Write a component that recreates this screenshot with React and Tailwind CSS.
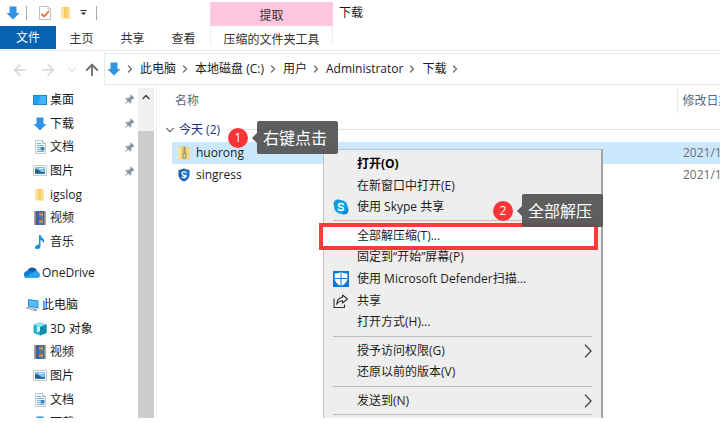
import React from 'react';
import { ArrowLeft, ArrowRight, ArrowUp, ChevronDown, ChevronRight, ChevronUp } from 'lucide-react';

/* ---------- Icons ---------- */

const DownArrowIcon = () => (
    <svg width="14" height="14" viewBox="0 0 14 14">
        <path d="M3.500 0.500h7v6.500h3L7 13.500 0.500 7h3z" fill="#3193e3" />
    </svg>
);

const FolderIcon = () => (
    <svg width="14" height="14" viewBox="0 0 14 14">
        <path d="M2.500 1h7.500v11H2.500z" fill="#f5cf66" />
        <path d="M8.500 2.500h2.500V13H4l4.500-1z" fill="#fbe09a" />
        <path d="M2.500 1l2.500 1v11l-2.500-1z" fill="#fae3a0" />
    </svg>
);

const CheckDocIcon = () => (
    <svg width="14" height="16" viewBox="0 0 14 16">
        <path d="M1.500 1.500h8.500l2.500 2.500v10.500h-11z" fill="#fff" stroke="#c0c0c0" />
        <path d="M10 1.500V4h2.500" fill="none" stroke="#c0c0c0" />
        <path d="M3.500 9l2.500 2.500 5-5.500" fill="none" stroke="#ec6a2c" strokeWidth="1.800" />
    </svg>
);

const DesktopIcon = () => (
    <svg width="14" height="14" viewBox="0 0 14 14">
        <path d="M0 2h14v10H0z" fill="#1787d8" />
        <path d="M1 3h12v8H1z" fill="#1fa2f4" />
        <path d="M8 3h5v8H5z" fill="#43b6fb" />
    </svg>
);

const DocumentIcon = () => (
    <svg width="14" height="14" viewBox="0 0 14 14">
        <path d="M2.500 0.500h7l3 3v10h-10z" fill="#f7f9fa" stroke="#c3cacf" />
        <path d="M9.500 0.500v3h3" fill="#dfe5e9" stroke="#b4bcc2" />
        <path d="M4 3.500h4M4 5.500h7M4 7.500h3M4 9.500h3M4 11.500h7" stroke="#6fb2de" />
        <path d="M7.500 7h4v3.500h-4z" fill="#3b83b8" />
    </svg>
);

const PictureIcon = () => (
    <svg width="14" height="14" viewBox="0 0 14 14">
        <path d="M0.500 1.500h13v10H0.500z" fill="#fff" stroke="#c0c6ca" />
        <path d="M2 3h10v7H2z" fill="#7cc3f1" />
        <path d="M2 5q3 0 5 2t5 1v2H2z" fill="#2e6171" />
        <path d="M2 9q5-1 10-0.500V10H2z" fill="#2c78bd" />
        <path d="M6 4h4v1H6z" fill="#e6f4fc" />
    </svg>
);

const VideoIcon = () => (
    <svg width="14" height="14" viewBox="0 0 14 14">
        <path d="M1.500 0h11v14h-11z" fill="#4b4f57" />
        <path d="M4 0.500h6v6H4zM4 7.500h6v6H4z" fill="#4a8ff0" />
        <path d="M4 0.500h2v6H4zM4 7.500h2v6H4z" fill="#2f5fc4" />
        <path d="M6 1.500l3-0.500v3H6z" fill="#c9562e" />
        <path d="M6 8.500l3-0.500v3H6z" fill="#c9562e" />
        <path d="M6 3h4v1.500H6zM6 10h4v1.500H6z" fill="#d9b13a" />
        <path d="M6 4.500h3v1H6zM6 11.500h3v1H6z" fill="#2f7a3e" />
        <path d="M2.700 0.500v13M11.300 0.500v13" stroke="#e8e8e8" strokeWidth="1" strokeDasharray="1 1" />
    </svg>
);

const MusicIcon = () => (
    <svg width="14" height="14" viewBox="0 0 14 14">
        <path d="M6 0h1.500q0.500 2 2.500 3.500t0.500 5q0-2.500-3-3.500v6q0 3-3 3T2 12t3-2.500l1 0.200z" fill="#1592e6" />
    </svg>
);

const CloudIcon = () => (
    <svg width="16" height="12" viewBox="0 0 16 12">
        <path d="M3 5q1-4.500 5-4.500T13 4L8 7z" fill="#0f5cb0" />
        <path d="M3.500 4q2-1 4 0.500L12 8l-8.500 3Q0 11 0 7.500T3.500 4z" fill="#157bd2" />
        <path d="M9 5.500q2-2.500 4.500-1.200 2.500 1 2.500 3.500 0 3.200-3.200 3.200H3.500q-1.500 0-2.300-0.800z" fill="#2ba2ee" />
    </svg>
);

const ComputerIcon = () => (
    <svg width="15" height="14" viewBox="0 0 15 14">
        <path d="M3 1l10.500 1.500v8L3 8.500z" fill="#2b8ed8" />
        <path d="M4 2.200l8.500 1.200v5.800L4 7.700z" fill="#57bdf5" />
        <path d="M0.500 10l3-1.500 9 3-2 1.800z" fill="#8a97a3" />
        <path d="M2.500 10l1.500-0.700 6 2-0.800 0.800z" fill="#d3dae0" />
    </svg>
);

const CubeIcon = () => (
    <svg width="14" height="14" viewBox="0 0 14 14">
        <path d="M7 0.500l6.500 2v8.500L7 13.500 0.500 11V2.500z" fill="#28b3d2" />
        <path d="M7 0.500l6.500 2L7 5 0.500 2.500z" fill="#8fe3f0" />
        <path d="M7 5l6.500-2.500V11L7 13.500z" fill="#148dac" />
        <path d="M4 4v6.500L7 9V5z" fill="#c8f3f8" />
    </svg>
);

const PinIcon = () => (
    <svg width="10" height="11" viewBox="0 0 10 11">
        <path d="M6 0.500L9.500 4l-1 0.800-0.700-0.100-1.600 1.800 0.100 2.200-0.900 0.900L3.300 7.500 0.500 10.300 0 10l2.500-3.300L0.600 4.800l0.900-0.900 2.200 0.100 1.700-1.700-0.100-0.900z" fill="#8b98a4" />
    </svg>
);

const ZipIcon = () => (
    <svg width="14" height="14" viewBox="0 0 14 14">
        <path d="M1 0.500h5l1 1h6v12H1z" fill="#efc95f" />
        <path d="M1 0.500l3.500 1v12.500l-3.500-1z" fill="#fae29b" />
        <path d="M9.500 2.500H13v11H9.500z" fill="#f8da87" />
        <path d="M7.500 0.500v7.500" stroke="#77715c" strokeWidth="2" strokeDasharray="1 1" />
        <path d="M6 7.500h3v4.500h-3z" fill="#c9cbcc" stroke="#888" strokeWidth="0.800" />
    </svg>
);

const ShieldSIcon = () => (
    <svg width="12" height="14" viewBox="0 0 12 14">
        <path d="M6 0.500l5.500 1.700v5Q11 11.500 6 13.500 1 11.500 0.500 7.200v-5z" fill="#155fae" />
        <path d="M6 1.800l4.300 1.300v4Q10 10.500 6 12.200z" fill="#2d83d3" />
        <path d="M8.200 4.300Q4 3 4 5.300T8 8q0 2.200-4.300 1.300" fill="none" stroke="#fff" strokeWidth="1.400" />
    </svg>
);

const SkypeIcon = () => (
    <svg width="16" height="16" viewBox="0 0 16 16">
        <circle cx="5" cy="5" r="4.500" fill="#1597dd" />
        <circle cx="11" cy="11" r="4.500" fill="#0b7ec8" />
        <circle cx="8" cy="8" r="6.800" fill="#0e9fe0" />
        <path d="M10.600 5.700Q9.800 4.600 8 4.600 5.700 4.600 5.700 6.200T8 7.900t2.500 1.900Q10.500 11.400 8 11.400 6 11.400 5.300 10.100" fill="none" stroke="#fff" strokeWidth="1.500" strokeLinecap="round" />
    </svg>
);

const DefenderIcon = () => (
    <svg width="16" height="16" viewBox="0 0 16 16">
        <path d="M0 0h16v16H0z" fill="#0a78d7" />
        <path d="M8 1q2.500 1.500 6.300 1.500v5.500q-0.600 4.700-6.300 7-5.700-2.300-6.300-7V2.500Q5.500 2.500 8 1z" fill="#fff" />
        <path d="M8 1v14M1.500 7.500h13" stroke="#0a78d7" strokeWidth="1" />
    </svg>
);

const ShareIcon = () => (
    <svg width="16" height="14" viewBox="0 0 16 14" fill="none" stroke="#333" strokeWidth="1.100">
        <path d="M1 4.500v9h10.500v-3" />
        <path d="M9.500 1l5 4-5 4V6.700Q6 6.500 3.700 10.300 4 4 9.500 3.300z" strokeLinejoin="round" />
    </svg>
);

const SubmenuArrow = () => (
    <svg width="8" height="14" viewBox="0 0 8 14" fill="none" stroke="#333" strokeWidth="1.200">
        <path d="M1 0.700L7 7l-6 6.300" />
    </svg>
);

/* ---------- Data ---------- */

const crumbs = ['此电脑', '本地磁盘 (C:)', '用户', 'Administrator', '下载'];

const quickAccess = [
    { label: '桌面', icon: <DesktopIcon />, pinned: true },
    { label: '下载', icon: <DownArrowIcon />, pinned: true },
    { label: '文档', icon: <DocumentIcon />, pinned: true },
    { label: '图片', icon: <PictureIcon />, pinned: true },
    { label: 'igslog', icon: <FolderIcon /> },
    { label: '视频', icon: <VideoIcon /> },
    { label: '音乐', icon: <MusicIcon /> }
];

const thisPc = [
    { label: '3D 对象', icon: <CubeIcon /> },
    { label: '视频', icon: <VideoIcon /> },
    { label: '图片', icon: <PictureIcon /> },
    { label: '文档', icon: <DocumentIcon /> },
    { label: '下载', icon: <DownArrowIcon /> }
];

const menuGroups = [
    {
        height: 'h-[65px]',
        items: [
            { label: '打开(O)', bold: true },
            { label: '在新窗口中打开(E)' },
            { label: '使用 Skype 共享', icon: <SkypeIcon /> }
        ]
    },
    {
        height: 'h-[108px]',
        items: [
            { label: '全部解压缩(T)...', marked: true },
            { label: '固定到“开始”屏幕(P)' },
            { label: '使用 Microsoft Defender扫描...', icon: <DefenderIcon /> },
            { label: '共享', icon: <ShareIcon /> },
            { label: '打开方式(H)...' }
        ]
    },
    {
        height: 'h-[43px]',
        items: [
            { label: '授予访问权限(G)', submenu: true },
            { label: '还原以前的版本(V)' }
        ]
    },
    {
        height: 'h-[21px]',
        items: [{ label: '发送到(N)', submenu: true }]
    },
    {
        height: 'h-[43px]',
        items: []
    }
];

/* ---------- Parts ---------- */

function TitleBar() {
    return (
        <header className="flex h-[51px] shrink-0 border-b border-[#e9e9e9]">
            <div className="flex flex-col">
                <div className="flex h-[26px] items-center pl-[6px]">
                    <DownArrowIcon />
                    <span className="ml-[6px] h-[14px] w-px bg-[#a8a8a8]" />
                    <button aria-label="属性" className="ml-[11px]"><CheckDocIcon /></button>
                    <button aria-label="新建文件夹" className="ml-[7px]"><FolderIcon /></button>
                    <button aria-label="自定义快速访问工具栏" className="ml-[7px]">
                        <svg width="7" height="6" viewBox="0 0 7 6">
                            <path d="M0.500 0.500h6" stroke="#222" />
                            <path d="M1 2.500h5L3.500 5z" fill="#222" />
                        </svg>
                    </button>
                    <span className="ml-[9px] h-[14px] w-px bg-[#a8a8a8]" />
                </div>
                <nav className="flex h-[23px] text-[#333]">
                    <button className="w-[56px] bg-[#0563b1] text-white">文件</button>
                    <button className="w-[51px] pt-[2px]">主页</button>
                    <button className="w-[51px] pt-[2px]">共享</button>
                    <button className="w-[51px] pt-[2px]">查看</button>
                </nav>
            </div>
            <div className="ml-px flex w-[123px] flex-col pt-[2px] text-[#333]">
                <div className="flex h-[24px] items-center justify-center bg-[#fdc5de] pt-[3px]">提取</div>
                <button className="h-[19px] border-x border-[#ececec] pt-[5px]">压缩的文件夹工具</button>
            </div>
            <h1 className="h-[26px] pl-[6px] leading-[25px]">下载</h1>
        </header>
    );
}

function AddressBar() {
    return (
        <div className="mt-[2px] flex h-[32px] shrink-0">
            <div className="flex w-[104px] items-center pl-[11px] pt-px">
                <button aria-label="后退" className="text-[#d4d4d4]"><ArrowLeft size={18} strokeWidth={2} /></button>
                <button aria-label="前进" className="ml-[10px] text-[#d4d4d4]"><ArrowRight size={18} strokeWidth={2} /></button>
                <button aria-label="最近" className="ml-[9px] text-[#cccccc]"><ChevronDown size={12} strokeWidth={2} /></button>
                <button aria-label="上移" className="ml-[5px] text-[#6f6f6f]"><ArrowUp size={18} strokeWidth={2.5} /></button>
            </div>
            <div className="flex flex-1 items-center border-y border-l border-[#e9e9e9] pl-[2px]">
                <DownArrowIcon />
                <ChevronRight size={12} strokeWidth={3} className="ml-[3px] text-[#777]" />
                {crumbs.map(c => (
                    <div key={c} className="flex items-center">
                        <a href="#" className="pl-[4px] pr-[3px]">{c}</a>
                        <ChevronRight size={12} strokeWidth={3} className="text-[#777]" />
                    </div>
                ))}
            </div>
        </div>
    );
}

function TreeItem({ item }) {
    return (
        <a href="#" className="flex flex-1 items-center pl-[33px] pr-[3px]">
            {item.icon}
            <span className="ml-[3px] flex-1">{item.label}</span>
            {item.pinned && <PinIcon />}
        </a>
    );
}

function Sidebar() {
    return (
        <aside className="flex w-[157px] shrink-0 border-r border-[#f0f0f0] pt-[3px]">
            <nav className="w-[138px]">
                <div className="flex h-[166px] flex-col">
                    {quickAccess.map(item => <TreeItem key={item.label} item={item} />)}
                </div>
                <a href="#" className="mt-[7px] flex h-[24px] items-center pl-[24px]">
                    <CloudIcon />
                    <span className="ml-[2px]">OneDrive</span>
                </a>
                <div className="mt-[8px] flex h-[142px] flex-col">
                    <a href="#" className="flex flex-1 items-center pl-[25px]">
                        <ComputerIcon />
                        <span className="ml-[2px]">此电脑</span>
                    </a>
                    {thisPc.map(item => <TreeItem key={item.label} item={item} />)}
                </div>
            </nav>
            <div className="flex w-[16px] flex-col bg-[#f0f0f0]">
                <button aria-label="向上滚动" className="flex h-[43px] justify-center pt-[3px] text-[#444]">
                    <ChevronUp size={12} strokeWidth={3} />
                </button>
                <div className="flex-1 bg-[#cdcdcd]" />
            </div>
        </aside>
    );
}

function Callout({ number, children }) {
    return (
        <div className="flex items-center">
            <span className="flex size-[20px] items-center justify-center rounded-full bg-[#fb3438] text-white">{number}</span>
            <svg width="5" height="10" viewBox="0 0 5 10" className="ml-[4px]">
                <path d="M5 0v10L0 5z" fill="#5c5c5c" />
            </svg>
            <span className="h-[33px] w-[81px] whitespace-nowrap rounded-[2px] bg-[#555555]/95 pl-[6px] text-[16px] leading-[34px] text-white">
                {children}
            </span>
        </div>
    );
}

function ContextMenu() {
    return (
        <div className="absolute left-[166px] top-[7px] z-10 w-[280px] border border-r-2 border-[#c4c4c4] border-r-[#a2a2a2] bg-[#eeeeee] pt-[3px] text-[#1c1c1c]">
            {menuGroups.map((group, idx) => (
                <div key={idx}>
                    {idx > 0 && <hr className={`ml-[9px] mr-[9px] border-[#bdbdbd] ${idx === 1 ? 'mb-[4px] mt-[2px]' : 'my-[3px]'}`} />}
                    <ul className={`flex flex-col ${group.height}`}>
                        {group.items.map(item => (
                            <li key={item.label} className="relative flex min-h-0 flex-1">
                                {item.marked && (
                                    <span className="absolute -left-[5px] -top-[2px] h-[27px] w-[279px] border-4 border-[#fb3a3c] bg-white" />
                                )}
                                <button className={`relative flex w-full items-center pl-[9px] pr-[9px] text-left ${item.bold ? 'font-bold text-black' : ''}`}>
                                    <span className="flex w-[24px]">{item.icon}</span>
                                    <span className="flex-1 whitespace-nowrap">{item.label}</span>
                                    {item.submenu && <SubmenuArrow />}
                                </button>
                            </li>
                        ))}
                    </ul>
                </div>
            ))}
            <div className="absolute left-[169px] top-[44px]">
                <Callout number={2}>全部解压</Callout>
            </div>
        </div>
    );
}

function FileList() {
    return (
        <main className="relative min-w-0 flex-1 overflow-hidden pt-[3px]">
            <table className="w-full table-fixed border-collapse whitespace-nowrap text-left">
                <thead className="text-[#56677f]">
                    <tr className="h-[25px]">
                        <th className="pl-[18px] font-normal">名称</th>
                        <th className="w-[43px] overflow-hidden border-l border-[#e8e8e8] pl-[5px] font-normal">修改日期</th>
                    </tr>
                </thead>
                <tbody>
                    <tr className="h-[29px]">
                        <td colSpan={2}>
                            <div className="flex items-center pl-[6px] pt-[4px] text-[#1e3287]">
                                <ChevronDown size={14} strokeWidth={2} className="text-[#777]" />
                                <span className="ml-[2px]">今天 (2)</span>
                                <span className="ml-[7px] h-px flex-1 bg-[#e2e2e2]" />
                            </div>
                        </td>
                    </tr>
                    <tr className="h-[21px]">
                        <td className="relative pl-[15px]">
                            <div className="flex h-[22px] items-center bg-[#cce8ff] pl-[5px]">
                                <ZipIcon />
                                <span className="ml-[5px]">huorong</span>
                            </div>
                            <ContextMenu />
                            <div className="absolute left-[71px] -top-[21px] z-20">
                                <Callout number={1}>右键点击</Callout>
                            </div>
                        </td>
                        <td className="overflow-hidden text-[#6d6d6d]">
                            <div className="flex h-[22px] items-center bg-[#cce8ff] pl-[6px]">2021/1</div>
                        </td>
                    </tr>
                    <tr className="h-[21px]">
                        <td className="pl-[15px]">
                            <div className="flex items-center pl-[6px]">
                                <ShieldSIcon />
                                <span className="ml-[6px]">singress</span>
                            </div>
                        </td>
                        <td className="overflow-hidden pl-[6px] text-[#6d6d6d]">2021/1</td>
                    </tr>
                </tbody>
            </table>
        </main>
    );
}

export default function App() {
    return (
        <div className="h-screen bg-white pb-[5px] font-['Open_Sans','Noto_Sans_CJK_SC',sans-serif] text-[12px] leading-[18px] text-[#1a1a1a]">
            <div className="flex h-full flex-col overflow-hidden">
                <TitleBar />
                <AddressBar />
                <div className="flex min-h-0 flex-1 overflow-hidden">
                    <Sidebar />
                    <FileList />
                </div>
            </div>
        </div>
    );
}
